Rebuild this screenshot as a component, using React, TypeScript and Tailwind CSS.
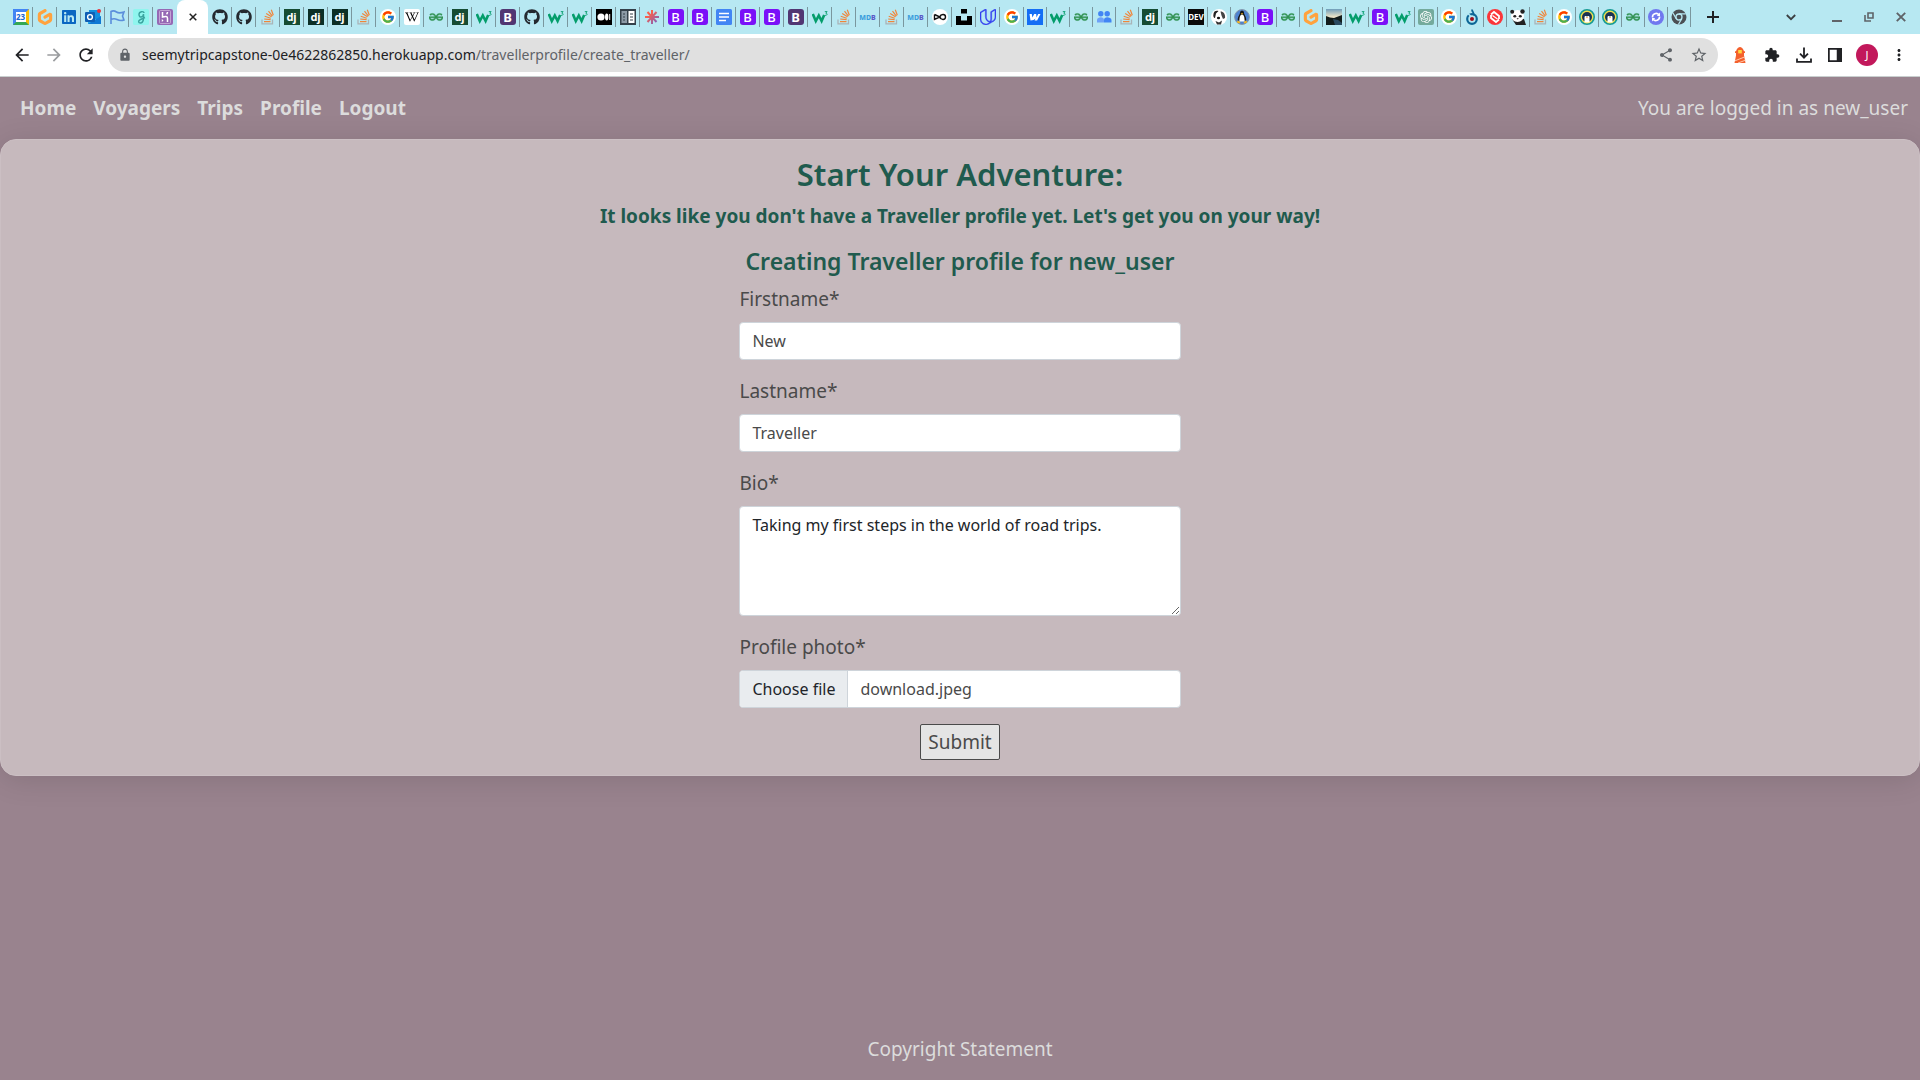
import type { ReactNode } from "react";
import { FaGithub, FaWikipediaW, FaLinkedin } from "react-icons/fa";
import { FcGoogle } from "react-icons/fc";
import { SiGeeksforgeeks, SiOpenai, SiUdacity, SiUnsplash, SiGitpod } from "react-icons/si";
import {
  MdArrowBack,
  MdArrowForward,
  MdRefresh,
  MdLock,
  MdShare,
  MdStarBorder,
  MdExtension,
  MdMoreVert,
} from "react-icons/md";

type TabKind =
  | "calendar" | "gitpod" | "linkedin" | "outlook" | "flag" | "g" | "heroku"
  | "github" | "so" | "dj" | "djDark" | "google" | "wiki" | "gfg" | "w3"
  | "bDark" | "b" | "medium" | "book" | "aster" | "docs" | "mdb" | "loop"
  | "unsplash" | "udacity" | "webflow" | "people" | "dev" | "dog" | "linux"
  | "photo" | "openai" | "drop" | "red" | "panda" | "penguin" | "purple" | "chrome";

const pinnedTabs: TabKind[] = ["calendar", "gitpod", "linkedin", "outlook", "flag", "g", "heroku"];

const wideTabs: TabKind[] = [
  "github", "github", "so", "dj", "djDark", "djDark", "so", "google", "wiki", "gfg", "dj", "w3",
  "bDark", "github", "w3", "w3", "medium", "book", "aster", "b", "b", "docs", "b", "b", "bDark",
  "w3", "so", "mdb", "so", "mdb", "loop", "unsplash", "udacity", "google",
];

const narrowTabs: TabKind[] = [
  "webflow", "w3", "gfg", "people", "so", "dj", "gfg", "dev", "dog", "linux", "b", "gfg", "gitpod",
  "photo", "w3", "b", "w3", "openai", "google", "drop", "red", "panda", "so", "google", "penguin",
  "penguin", "gfg", "purple", "chrome",
];

function Svg({ children }: { children: ReactNode }) {
  return (
    <svg viewBox="0 0 16 16" className="size-4" aria-hidden="true">
      {children}
    </svg>
  );
}

function Favicon({ kind }: { kind: TabKind }) {
  switch (kind) {
    case "calendar":
      return (
        <span className="flex size-4 items-center justify-center border-[3px] border-t-[#4285f4] border-r-[#fbbc04] border-b-[#34a853] border-l-[#4285f4] bg-white text-[8px] leading-none font-bold text-[#1967d2]">
          23
        </span>
      );
    case "gitpod":
      return <SiGitpod className="size-4 text-[#ffa23e]" />;
    case "linkedin":
      return <FaLinkedin className="size-4 text-[#0a66c2]" />;
    case "outlook":
      return (
        <Svg>
          <rect x="4" y="1" width="11" height="9" fill="#1490df" />
          <path d="M3 7l7 4 6-4v8H3z" fill="#28a8ea" />
          <path d="M3 15l13-8v8z" fill="#0f78d4" />
          <rect x="0" y="3" width="10" height="10" rx="1" fill="#0f5fb5" />
          <circle cx="5" cy="8" r="2.4" fill="none" stroke="#fff" strokeWidth="1.4" />
          <circle cx="14" cy="2" r="2" fill="#e8323c" />
        </Svg>
      );
    case "flag":
      return (
        <Svg>
          <path d="M2 15V2.500c2-1 4-.5 5.500.5S12 4 15 3l-1.500 4 1.500 4c-3 1-5 .5-7-.5S4 9.500 2 10.500" fill="none" stroke="#5b8edb" strokeWidth="1.600" />
        </Svg>
      );
    case "g":
      return (
        <Svg>
          <rect width="16" height="16" rx="1.500" fill="#8ff5ee" />
          <path d="M11 4c0-2-5-2-5 1.500S10 9 10.500 5c.5 4 0 9-3 9-2 0-3-2 0-3.500L12 8.500" fill="none" stroke="#3aa39f" strokeWidth="1.400" />
        </Svg>
      );
    case "heroku":
      return (
        <Svg>
          <rect width="16" height="16" rx="2" fill="#9668b4" />
          <rect x="2.500" y="1.500" width="11" height="13" rx="1" fill="none" stroke="#cdb3dc" strokeWidth=".8" />
          <path d="M5.500 3v5c3-1 5-.8 5 1.200V13M10.500 3c0 1-.4 1.700-1 2.300" fill="none" stroke="#fff" strokeWidth="1.500" />
          <path d="M4.800 10v3l1.700-1.500z" fill="#fff" />
        </Svg>
      );
    case "github":
      return <FaGithub className="size-4 text-[#24292f]" />;
    case "so":
      return (
        <Svg>
          <path d="M2 10.500v4.300h10.500v-4.300" fill="none" stroke="#a9b4b8" strokeWidth="1.300" />
          <path d="M4 12.600h6.500M4.200 10l6.400.7M4.700 7.300l6.100 1.900M6.200 4.500l5.300 3.300M8.500 2.200l3.900 4.900M11.300.8l2 5.500" stroke="#f0853a" strokeWidth="1.200" />
        </Svg>
      );
    case "dj":
      return (
        <span className="flex size-4 items-center justify-center bg-[#164c33] pb-0.5 text-[11px] leading-none font-bold text-white">dj</span>
      );
    case "djDark":
      return (
        <span className="flex size-4 items-center justify-center bg-[#0c2f26] pb-0.5 text-[11px] leading-none font-bold text-white">dj</span>
      );
    case "google":
      return (
        <span className="flex size-4 items-center justify-center rounded-full bg-white">
          <FcGoogle className="size-3.5" />
        </span>
      );
    case "wiki":
      return (
        <span className="flex size-4 items-center justify-center rounded-xs bg-white">
          <FaWikipediaW className="size-3.5 text-black" />
        </span>
      );
    case "gfg":
      return <SiGeeksforgeeks className="size-3.5 text-[#2f9150]" stroke="#2f9150" strokeWidth="0.8" />;
    case "w3":
      return (
        <Svg>
          <path d="M.8 5l3 7 3-5.500 2.800 5.500 2.600-6" fill="none" stroke="#049d6b" strokeWidth="2.600" />
          <path d="M12.800 2.600h2.300l-1.300 1.600c2 0 1.700 2.600-.9 2.100" fill="none" stroke="#049d6b" strokeWidth=".9" />
        </Svg>
      );
    case "bDark":
      return (
        <span className="flex size-4 items-center justify-center rounded-[3px] bg-[#513672] text-[13px] leading-none font-bold text-white">B</span>
      );
    case "b":
      return (
        <span className="flex size-4 items-center justify-center rounded-[3px] bg-[#7a10f8] text-[13px] leading-none font-medium text-white">B</span>
      );
    case "medium":
      return (
        <Svg>
          <rect width="16" height="16" fill="#000" />
          <circle cx="5" cy="8" r="3.600" fill="#fff" />
          <ellipse cx="10.700" cy="8" rx="1.700" ry="3.400" fill="#fff" />
          <rect x="13.200" y="5" width="1" height="6" fill="#fff" />
        </Svg>
      );
    case "book":
      return (
        <Svg>
          <rect width="16" height="16" fill="#34404a" />
          <rect x="1.500" y="2" width="5.500" height="12" fill="#8d9aa6" />
          <rect x="8.500" y="2" width="6" height="12" fill="#fff" />
          <path d="M3 5h2M3 8h2M3 11h2M10 5h3M10 8h3M10 11h3" stroke="#34404a" strokeWidth="1.200" />
        </Svg>
      );
    case "aster":
      return (
        <Svg>
          <defs>
            <linearGradient id="aster" x1="0" x2="1" y1="0" y2="1">
              <stop offset=".3" stopColor="#f9604c" />
              <stop offset="1" stopColor="#6b5fd0" />
            </linearGradient>
          </defs>
          <path d="M8 1v14M1 8h14M3.500 3l9 10M12.500 3l-9 10" stroke="url(#aster)" strokeWidth="2" />
        </Svg>
      );
    case "docs":
      return (
        <Svg>
          <rect width="16" height="16" rx="1.500" fill="#4285f4" />
          <path d="M3 4.500h10M3 8h10M3 11.500h7" stroke="#fff" strokeWidth="1.600" />
        </Svg>
      );
    case "mdb":
      return (
        <span className="flex text-[7px] leading-none font-extrabold text-[#3d9fdd]">
          MD<span className="text-[#5b57c8]">B</span>
        </span>
      );
    case "loop":
      return (
        <Svg>
          <circle cx="8" cy="8" r="8" fill="#fff" />
          <path d="M2.500 5.500v5L8 8l-5.500-2.500M7.500 8c1.500-3.500 6-3.200 6 0s-4.500 3.500-6 0z" fill="none" stroke="#111" strokeWidth="1.400" />
        </Svg>
      );
    case "unsplash":
      return <SiUnsplash className="size-4 text-black" />;
    case "udacity":
      return <SiUdacity className="size-4 text-[#3340f0]" stroke="#3340f0" strokeWidth="0.6" />;
    case "webflow":
      return (
        <Svg>
          <rect width="16" height="16" fill="#146ef5" />
          <path d="M13.500 5l-3.400 6.500H7.600L8.500 9.500C7.300 10.800 6 11.400 3.500 11.500L2.500 5h2.300l.6 3.600L7.200 5h2l.3 3.500L11.200 5z" fill="#fff" />
        </Svg>
      );
    case "people":
      return (
        <Svg>
          <circle cx="4.800" cy="4.800" r="2.700" fill="#4285f4" />
          <circle cx="11.200" cy="4.800" r="2.700" fill="#4285f4" />
          <path d="M1 13.500v-2.500C1 9 3 8.200 4.800 8.200S8 9 8 11v2.500z" fill="#6ea2f8" />
          <path d="M8 13.500v-2.500c0-2 1.500-2.800 3.200-2.800S15.500 9 15.500 11v2.500z" fill="#4285f4" />
        </Svg>
      );
    case "dev":
      return (
        <span className="flex h-4 w-4 items-center justify-center bg-[#0a0a0a] text-[8px] leading-none font-bold text-white">DEV</span>
      );
    case "dog":
      return (
        <Svg>
          <circle cx="8" cy="8" r="8" fill="#fff" />
          <path d="M2.500 5c0-3 3-4 5-3L5 4.500 4 9C2.500 9 2 7 2.500 5z" fill="#222" />
          <path d="M9.500 2.500c3 0 5 2.500 4.500 6.500l-2 1-1.500-3.500z" fill="#444" />
          <ellipse cx="7.500" cy="9" rx="1.600" ry="1.200" fill="#111" />
          <path d="M4.500 12l3.500 1.500 3-2-1 4H6z" fill="#333" />
        </Svg>
      );
    case "linux":
      return (
        <Svg>
          <circle cx="8" cy="8" r="7.400" fill="#4d82cf" stroke="#8596a8" />
          <path d="M6 3.500C6 1 10 1 10 3.500c0 2.500 2.600 4 2.200 8H3.800C3.400 7.500 6 6 6 3.500z" fill="#171717" />
          <path d="M8 5.500c2 0 2.600 3 2.600 7H5.400c0-4 .6-7 2.600-7z" fill="#fff" />
          <path d="M6.800 4.300h2.400L8 5.800zM3.500 11.500l3 1.500-1 1.500-2.500-1zM12.500 11.500l-3 1.500 1 1.500 2.500-1z" fill="#f5b81c" />
        </Svg>
      );
    case "photo":
      return (
        <Svg>
          <defs>
            <linearGradient id="sky" x1="0" x2="0" y1="0" y2="1">
              <stop offset="0" stopColor="#6f9dba" />
              <stop offset=".5" stopColor="#efe6c8" />
            </linearGradient>
          </defs>
          <rect width="16" height="16" fill="url(#sky)" />
          <path d="M0 7l4 1.500 4 .5 4-1.500L16 6v10H0z" fill="#141d1c" />
          <path d="M7 10l5 1 4 3v2H9z" fill="#2b4a60" />
        </Svg>
      );
    case "openai":
      return (
        <span className="flex size-4 items-center justify-center rounded-xs bg-[#74aa9c]">
          <SiOpenai className="size-3 text-white" />
        </span>
      );
    case "drop":
      return (
        <Svg>
          <path d="M8 .5c0 3 3 3.500 1 5.500" fill="none" stroke="#0d6696" strokeWidth="1.800" />
          <circle cx="8" cy="10" r="4.800" fill="none" stroke="#0d6696" strokeWidth="2.200" />
          <circle cx="8" cy="10" r="2" fill="#a00c1c" />
          <path d="M4 4.500l3 3" stroke="#b7e8f2" strokeWidth="1.500" />
        </Svg>
      );
    case "red":
      return (
        <Svg>
          <circle cx="8" cy="8" r="8" fill="#fb3539" />
          <path d="M4 5.500l3-2.500 5 4v3M12 10.500L9 13 4 9V6" fill="none" stroke="#fff" strokeWidth="1.800" />
          <path d="M5.500 6.500l5 3.500" stroke="#fff" strokeWidth="1.200" />
        </Svg>
      );
    case "panda":
      return (
        <Svg>
          <path d="M2 10h12l2 6H6z" fill="#222" />
          <ellipse cx="7.500" cy="7" rx="6.500" ry="6" fill="#fff" />
          <circle cx="2.200" cy="2.800" r="2" fill="#222" />
          <circle cx="12.500" cy="2.500" r="2.200" fill="#222" />
          <ellipse cx="4.800" cy="7.200" rx="1.500" ry="1.200" fill="#222" />
          <ellipse cx="10.300" cy="7.200" rx="1.500" ry="1.200" fill="#222" />
          <path d="M6.500 9.300h2.400l-1.200 1.200z" fill="#222" />
        </Svg>
      );
    case "penguin":
      return (
        <Svg>
          <circle cx="8" cy="8" r="7.200" fill="#f0df4a" stroke="#169a96" strokeWidth="1.600" />
          <circle cx="8" cy="8" r="5" fill="#1b3352" />
          <path d="M5.500 8C5.500 6.500 8 6.500 8 8c0-1.500 2.500-1.500 2.500 0v5.500h-5z" fill="#fff" />
          <path d="M7 8h2l-1 1.500z" fill="#f0a52c" />
        </Svg>
      );
    case "purple":
      return (
        <Svg>
          <circle cx="8" cy="8" r="8" fill="#7078ef" />
          <path d="M4.500 8.500A3.600 3.600 0 0 1 11 6M11.500 7.500A3.600 3.600 0 0 1 5 10" fill="none" stroke="#fff" strokeWidth="1.600" />
          <path d="M12 3.500v3.500H8.800zM4 12.500V9h3.200z" fill="#fff" />
        </Svg>
      );
    case "chrome":
      return (
        <Svg>
          <circle cx="8" cy="8" r="7.500" fill="#4b4f54" />
          <circle cx="8" cy="8" r="3" fill="#4b4f54" stroke="#b7e8f2" strokeWidth="1.300" />
          <path d="M8 4.800h6.800M5.200 9.600L1.800 3.800M10.800 9.600L7.400 15.500" stroke="#b7e8f2" strokeWidth="1.200" />
        </Svg>
      );
  }
}

function Tab({ kind, narrow = false, last = false }: { kind: TabKind; narrow?: boolean; last?: boolean }) {
  return (
    <button
      type="button"
      aria-label={kind}
      className={`flex h-5 shrink-0 items-center justify-center border-r ${narrow ? "w-[23px]" : "w-6"} ${
        last ? "border-transparent" : "border-[#7a979e]"
      }`}
    >
      <Favicon kind={kind} />
    </button>
  );
}

function TabStrip() {
  return (
    <div className="flex h-[34px] items-center bg-[#b7e8f2] pl-[9px]">
      {pinnedTabs.map((kind, i) => (
        <Tab key={i} kind={kind} last={i === pinnedTabs.length - 1} />
      ))}
      <div className="flex h-full w-[31px] shrink-0 items-center justify-center rounded-t-lg bg-white">
        <button type="button" aria-label="Close tab">
          <svg viewBox="0 0 8 8" className="size-2" aria-hidden="true">
            <path d="M.7.7l6.600 6.600M7.300.7L.7 7.300" stroke="#222" strokeWidth="1.500" />
          </svg>
        </button>
      </div>
      {wideTabs.map((kind, i) => (
        <Tab key={i} kind={kind} />
      ))}
      {narrowTabs.map((kind, i) => (
        <Tab key={i} kind={kind} narrow />
      ))}
      <button type="button" aria-label="New tab" className="ml-4">
        <svg viewBox="0 0 12 12" className="size-3" aria-hidden="true">
          <path d="M6 0v12M0 6h12" stroke="#202124" strokeWidth="2" />
        </svg>
      </button>
      <div className="mr-3.5 ml-auto flex items-center gap-[22px] text-[#5f6368]">
        <button type="button" aria-label="Search tabs" className="mr-3.5">
          <svg viewBox="0 0 10 10" className="size-2.5" aria-hidden="true">
            <path d="M.8 3L5 7.200 9.200 3" fill="none" stroke="#3c4043" strokeWidth="1.800" />
          </svg>
        </button>
        <button type="button" aria-label="Minimize">
          <svg viewBox="0 0 10 10" className="size-2.5" aria-hidden="true">
            <path d="M0 9h10" stroke="currentColor" strokeWidth="2" />
          </svg>
        </button>
        <button type="button" aria-label="Restore">
          <svg viewBox="0 0 10 10" className="size-2.5" aria-hidden="true">
            <path d="M4 1h5v5H4zM1 3v6h6" fill="none" stroke="currentColor" strokeWidth="1.600" />
          </svg>
        </button>
        <button type="button" aria-label="Close">
          <svg viewBox="0 0 10 10" className="size-2.5" aria-hidden="true">
            <path d="M.8.8l8.400 8.400M9.200.8L.8 9.200" stroke="currentColor" strokeWidth="1.900" />
          </svg>
        </button>
      </div>
    </div>
  );
}

function Toolbar() {
  return (
    <div className="flex h-[43px] items-center border-b border-[#c9cfcf] bg-white pr-3 pl-3 text-[#202124]">
      <button type="button" aria-label="Back">
        <MdArrowBack className="size-5" />
      </button>
      <button type="button" aria-label="Forward" className="ml-3 text-[#9a9c9f]">
        <MdArrowForward className="size-5" />
      </button>
      <button type="button" aria-label="Reload" className="ml-3">
        <MdRefresh className="size-5" />
      </button>
      <div className="ml-3 flex h-[34px] flex-1 items-center rounded-full bg-[#e0e0e0] pr-2.5 pl-2.5 text-[#5f6368]">
        <MdLock className="size-3.5" />
        <p className="ml-2.5 flex-1 text-[14px] leading-5 whitespace-nowrap">
          <span className="text-[#202124]">seemytripcapstone-0e4622862850.herokuapp.com</span>/travellerprofile/create_traveller/
        </p>
        <button type="button" aria-label="Share">
          <MdShare className="size-4" />
        </button>
        <button type="button" aria-label="Bookmark" className="ml-4">
          <MdStarBorder className="size-[18px]" />
        </button>
      </div>
      <div className="ml-3.5 flex items-center gap-4">
        <button type="button" aria-label="Lighthouse">
          <Svg>
            <path d="M4 4.200C4.500 1.500 7 0 8 0s3.500 1.500 4 4.200h1V6h-1v2.500l1.500 7.500H2.500L4 8.500V6H3V4.200z" fill="#f4602c" />
            <rect x="6.200" y="3" width="3.600" height="3.400" fill="#ffd83d" />
            <path d="M3 13.800L12.500 10M6 16l7.500-2.800" stroke="#ffc9ae" strokeWidth="1" />
          </Svg>
        </button>
        <button type="button" aria-label="Extensions">
          <MdExtension className="size-4" />
        </button>
        <button type="button" aria-label="Downloads">
          <Svg>
            <path d="M8 .5v10M4 6.700l4 4 4-4M1 11.500v3.300h14v-3.300" fill="none" stroke="currentColor" strokeWidth="1.800" />
          </Svg>
        </button>
        <button type="button" aria-label="Side panel">
          <svg viewBox="0 0 16 16" className="size-3.5" aria-hidden="true">
            <path d="M1 1h14v14H1z" fill="none" stroke="currentColor" strokeWidth="2" />
            <path d="M10 1h5v14h-5z" fill="currentColor" />
          </svg>
        </button>
        <button
          type="button"
          aria-label="Account"
          className="-mr-1 flex size-[22px] items-center justify-center rounded-full bg-[#c2185b] text-[11px] text-white -ml-0.5"
        >
          J
        </button>
        <button type="button" aria-label="Menu">
          <MdMoreVert className="size-[18px]" />
        </button>
      </div>
    </div>
  );
}

const navLinks = ["Home", "Voyagers", "Trips", "Profile", "Logout"];

const control =
  "block w-full rounded border border-[#ced4da] bg-white px-3 py-1.5 text-[16px] leading-6";

function TextField({ id, label, value }: { id: string; label: string; value: string }) {
  return (
    <div className="mb-4">
      <label htmlFor={id} className="mb-2 block">
        {label}
      </label>
      <input id={id} type="text" defaultValue={value} className={control} />
    </div>
  );
}

export default function App() {
  return (
    <div className="flex min-h-screen flex-col bg-[#99838e] font-['Noto_Sans',sans-serif]">
      <header>
        <TabStrip />
        <Toolbar />
      </header>
      <nav className="flex h-[62px] items-center justify-between pr-3 pl-5 text-[19px] leading-[30px] text-[#dcdcdc]">
        <ul className="flex gap-[17px] font-bold">
          {navLinks.map((name) => (
            <li key={name}>
              <a href="#">{name}</a>
            </li>
          ))}
        </ul>
        <span>You are logged in as new_user</span>
      </nav>
      <main className="flex flex-col items-center rounded-2xl border border-[#cbbfc3] bg-[#c6b9bd] py-[15px] text-[19px] leading-[30px] text-[#4a4a4a] shadow-[0_4px_30px_rgba(0,0,0,0.12)]">
        <h1 className="mb-2 text-[31px] leading-[38px] font-semibold text-[#1f5b4e]">Start Your Adventure:</h1>
        <p className="mb-4 font-bold text-[#1f5b4e]">
          It looks like you don't have a Traveller profile yet. Let's get you on your way!
        </p>
        <h2 className="mb-2 text-[23px] leading-[29px] font-semibold text-[#1f5b4e]">
          Creating Traveller profile for new_user
        </h2>
        <form className="w-[23%]" onSubmit={(e) => e.preventDefault()}>
          <TextField id="firstname" label="Firstname*" value="New" />
          <TextField id="lastname" label="Lastname*" value="Traveller" />
          <div className="mb-4">
            <label htmlFor="bio" className="mb-2 block">
              Bio*
            </label>
            <textarea
              id="bio"
              defaultValue="Taking my first steps in the world of road trips."
              className={`${control} h-[110px] text-[#212529]`}
            />
          </div>
          <div className="mb-4">
            <label htmlFor="photo" className="mb-2 block">
              Profile photo*
            </label>
            <label
              htmlFor="photo"
              className="flex overflow-hidden rounded border border-[#ced4da] bg-white text-[16px] leading-6"
            >
              <span className="border-r border-[#ced4da] bg-[#e9ecef] px-3 py-1.5 text-[#212529]">Choose file</span>
              <span className="px-3 py-1.5">download.jpeg</span>
              <input id="photo" type="file" className="sr-only" />
            </label>
          </div>
          <div className="flex justify-center">
            <button
              type="submit"
              className="rounded-xs border border-[#4a4a4a] bg-[#e4e4e4] px-[7px] py-0.5"
            >
              Submit
            </button>
          </div>
        </form>
      </main>
      <footer className="mt-auto pb-4 text-center text-[19px] leading-[30px] text-[#dcdcdc]">Copyright Statement</footer>
    </div>
  );
}
